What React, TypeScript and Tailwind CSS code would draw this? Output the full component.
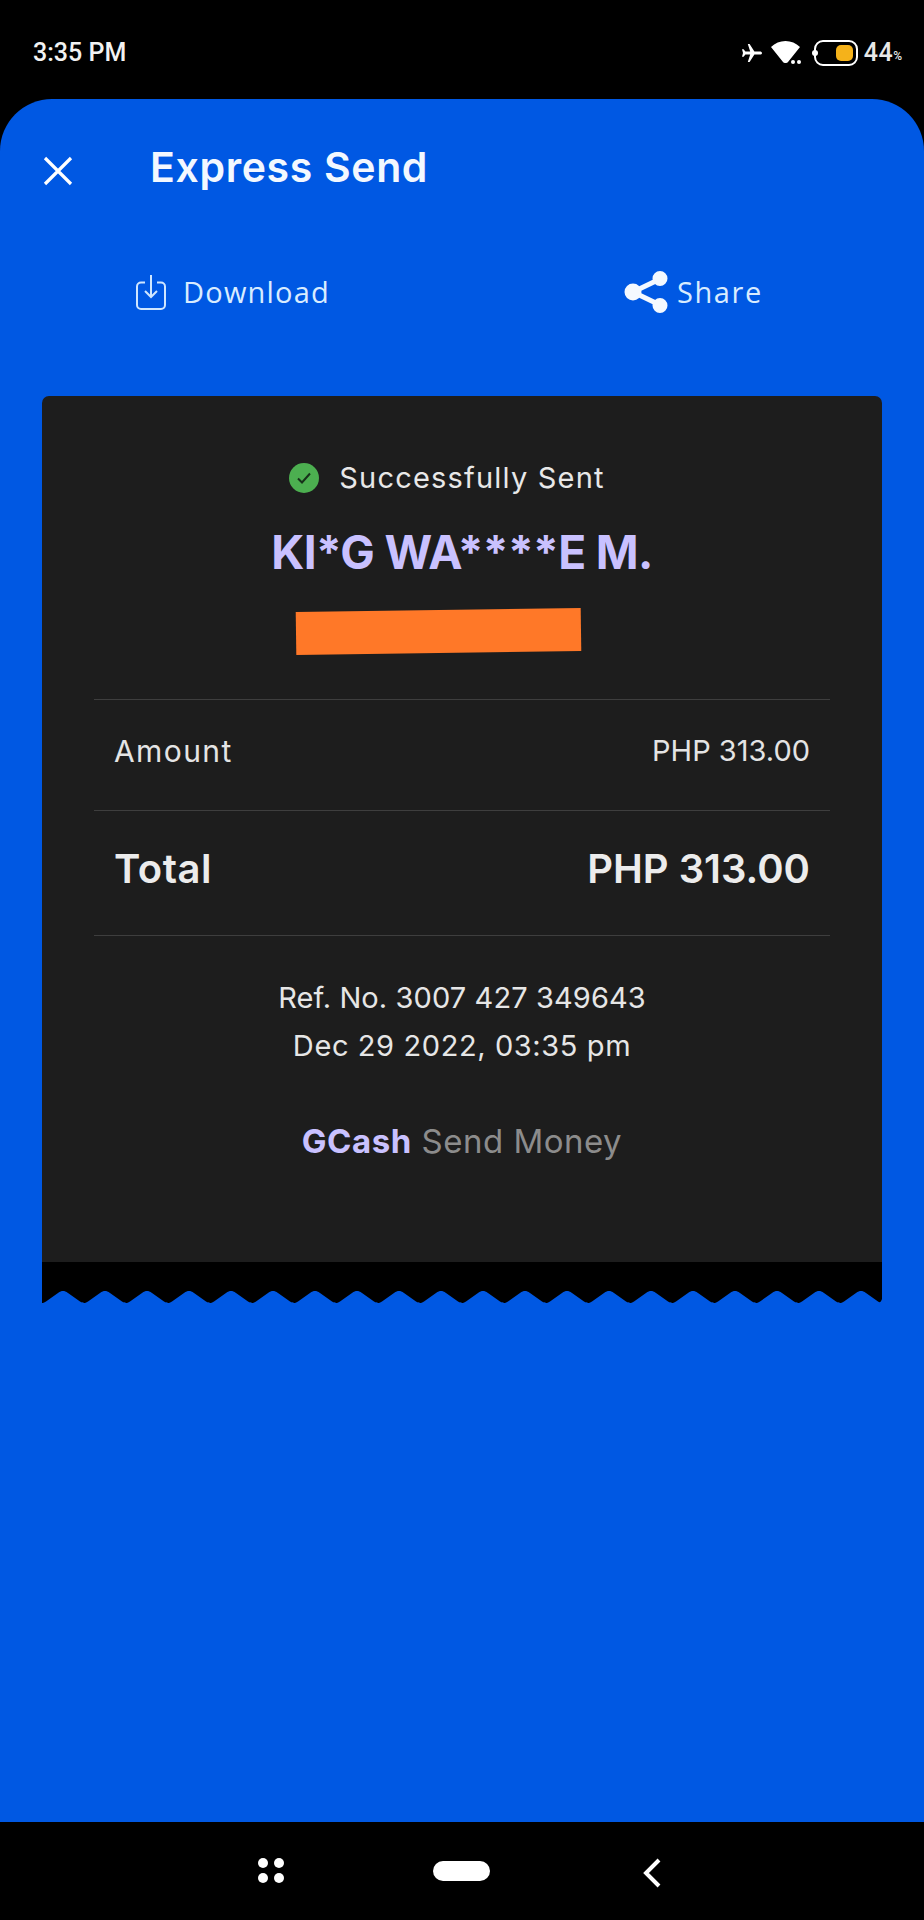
const font = { fontFamily: "Inter, 'Noto Sans', sans-serif" };

function wavePath() {
  // black torn strip at the bottom of the receipt, valleys every 42px
  const period = 42;
  let d = "M0 0 H840 V37 ";
  for (let x = 840; x > 0; x -= period) {
    d += `C${x - 1} 40 ${x - 2} 41 ${x - 4} 39.500 L${x - 16} 31 C${x - 18} 29.500 ${x - 19.500} 29 ${x - 21} 29 `;
    d += `C${x - 22.500} 29 ${x - 24} 29.500 ${x - 26} 31 L${x - 38} 39.500 C${x - 40} 41 ${x - 41} 41 ${x - 42} 41 `;
  }
  return d + "L0 37 Z";
}

export default function App() {
  return (
    <div className="flex h-[1920px] w-[924px] flex-col overflow-hidden bg-black text-white" style={font}>
      {/* status bar */}
      <div className="flex h-[99px] shrink-0 items-start justify-between pl-[33px] pr-[22px] pt-[38px]">
        <span className="text-[25px] font-medium leading-[30px] text-[#f2f2f2]" style={{ fontFamily: "Roboto, sans-serif" }}>3:35 PM</span>
        <div className="flex items-center" style={{ fontFamily: "Roboto, sans-serif" }}>
          <svg width="24" height="24" viewBox="0 0 24 24" fill="#fff">
            <path d="M22 12c0-1-1-1.600-2-1.600h-5.600L9.600 3H7.800l2.400 7.400H5.400L3.600 8.200H2l1 3.800-1 3.800h1.600l1.800-2.200h4.800L7.800 21h1.800l4.800-7.400H20c1 0 2-.6 2-1.600z" />
          </svg>
          <svg className="ml-[6px]" width="32" height="26" viewBox="0 0 32 26" fill="#fff">
            <path d="M1 7C5 3 10 1 15.500 1S26 3 30 7L18 22c-1 1.400-4 1.400-5 0z" />
            <rect x="21" y="20" width="4" height="4" rx="2" />
            <rect x="27" y="20" width="4" height="4" rx="2" />
          </svg>
          <div className="relative ml-[12px] h-[26px] w-[44px] rounded-[9px] border-2 border-white">
            <div className="absolute right-[3px] top-[3px] h-[16px] w-[17px] rounded-[5px] bg-[#f5b21a]" />
            <div className="absolute left-[-4px] top-[8px] h-[6px] w-[6px] rounded-full bg-white" />
          </div>
          <span className="ml-[6px] text-[25px] font-medium leading-[30px] tracking-[0.5px] text-[#e8e8e8]">44</span>
          <span className="mt-[6px] text-[12px] font-medium leading-[16px] text-[#e8e8e8]">%</span>
        </div>
      </div>

      {/* blue sheet */}
      <div className="flex min-h-0 flex-1 flex-col rounded-t-[52px] bg-[#0058e3]">
        <div className="flex h-[160px] shrink-0 items-start pl-[42px] pt-[43px]">
          <svg width="32" height="32" viewBox="0 0 32 32" stroke="#fff" strokeWidth="3.200" className="mt-[13px]">
            <path d="M3 3l26 26M29 3L3 29" />
          </svg>
          <h1 className="ml-[76px] text-[41px] font-semibold leading-[50px] tracking-[0.65px] text-[#f3f8ff]">Express Send</h1>
        </div>

        <div className="flex h-[65px] shrink-0 items-center">
          <div className="ml-[136px] flex items-center">
            <svg width="30" height="36" viewBox="0 0 30 36" fill="none" stroke="#cfe6ff" strokeWidth="2">
              <path d="M9 8.500H5a4 4 0 0 0-4 4V31a4 4 0 0 0 4 4h20a4 4 0 0 0 4-4V12.500a4 4 0 0 0-4-4h-4" />
              <path d="M15 1v21M9 17l6 6 6-6" />
            </svg>
            <span className="ml-[17px] text-[29px] leading-[36px] tracking-[1.200px] text-[#d9ecff]" style={{ fontFamily: "'Open Sans', sans-serif" }}>Download</span>
          </div>
          <div className="ml-[294px] flex items-center">
            <svg width="46" height="44" viewBox="0 0 46 44" fill="#f4f9ff" stroke="#f4f9ff" strokeWidth="5">
              <path d="M36 9L9 22l27 13" fill="none" />
              <circle cx="36" cy="8.500" r="5" />
              <circle cx="9" cy="22" r="6" />
              <circle cx="36" cy="35.500" r="5" />
            </svg>
            <span className="ml-[7px] text-[29px] leading-[36px] tracking-[1.600px] text-[#d9ecff]" style={{ fontFamily: "'Open Sans', sans-serif" }}>Share</span>
          </div>
        </div>

        {/* receipt */}
        <div className="mx-[42px] mt-[72px] w-[840px] shrink-0">
          <div className="flex h-[866px] flex-col rounded-t-[7px] bg-[#1d1d1d] px-[52px] pt-[62px]">
            <div className="flex h-[40px] items-center justify-center pr-[30px]">
              <svg width="30" height="30" viewBox="0 0 30 30">
                <circle cx="15" cy="15" r="15" fill="#4caf50" />
                <path d="M9 15.500l4 4 8-9" fill="none" stroke="#17301a" strokeWidth="2" />
              </svg>
              <span className="ml-[20px] text-[29px] leading-[36px] tracking-[1.200px] text-[#e8e8e8]">Successfully Sent</span>
            </div>
            <div className="mt-[26px] text-center text-[46px] font-bold leading-[56px] tracking-[-0.6px] text-[#c9c1ff]">KI*G WA****E M.</div>
            <div className="ml-[202px] mt-[30px] h-[43px] w-[285px] -rotate-[0.8deg] bg-[#ff7828]" />

            <div className="mt-[46px] flex h-[112px] items-center justify-between border-y border-[#3e3e3e] px-[20px] pb-[8px] text-[#e4e4e4]">
              <span className="text-[30px] tracking-[1.400px]">Amount</span>
              <span className="text-[29px]">PHP 313.00</span>
            </div>
            <div className="flex h-[125px] items-center justify-between border-b border-[#3e3e3e] px-[20px] pb-[8px] text-[40px] font-semibold text-[#ececec]">
              <span className="tracking-[0.5px]">Total</span>
              <span>PHP 313.00</span>
            </div>

            <div className="mt-[38px] text-center text-[29px] leading-[48px] text-[#e6e6e6]">
              <div className="tracking-[0.1px]">Ref. No. 3007 427 349643</div>
              <div className="tracking-[0.6px]">Dec 29 2022, 03:35 pm</div>
            </div>
            <div className="mt-[51px] text-center text-[33px] leading-[40px] tracking-[0.5px] text-[#8c8c8c]">
              <span className="font-bold text-[#c9c1ff]">GCash</span> Send Money
            </div>
          </div>
          <svg width="840" height="41" viewBox="0 0 840 41" className="block">
            <path d={wavePath()} fill="#000" />
          </svg>
        </div>
      </div>

      {/* nav bar */}
      <div className="flex h-[98px] shrink-0 items-start pt-[36px]">
        <div className="ml-[258px] grid w-[26px] grid-cols-2 gap-[5px]">
          <div className="h-[10px] w-[10px] rounded-full bg-white" />
          <div className="h-[10px] w-[10px] rounded-full bg-white" />
          <div className="h-[10px] w-[10px] rounded-full bg-white" />
          <div className="h-[10px] w-[10px] rounded-full bg-white" />
        </div>
        <div className="ml-[149px] mt-[3px] h-[20px] w-[57px] rounded-full bg-white" />
        <svg className="ml-[152px]" width="20" height="30" viewBox="0 0 20 30" fill="none" stroke="#fff" strokeWidth="4">
          <path d="M17 2L4 15l13 13" />
        </svg>
      </div>
    </div>
  );
}
